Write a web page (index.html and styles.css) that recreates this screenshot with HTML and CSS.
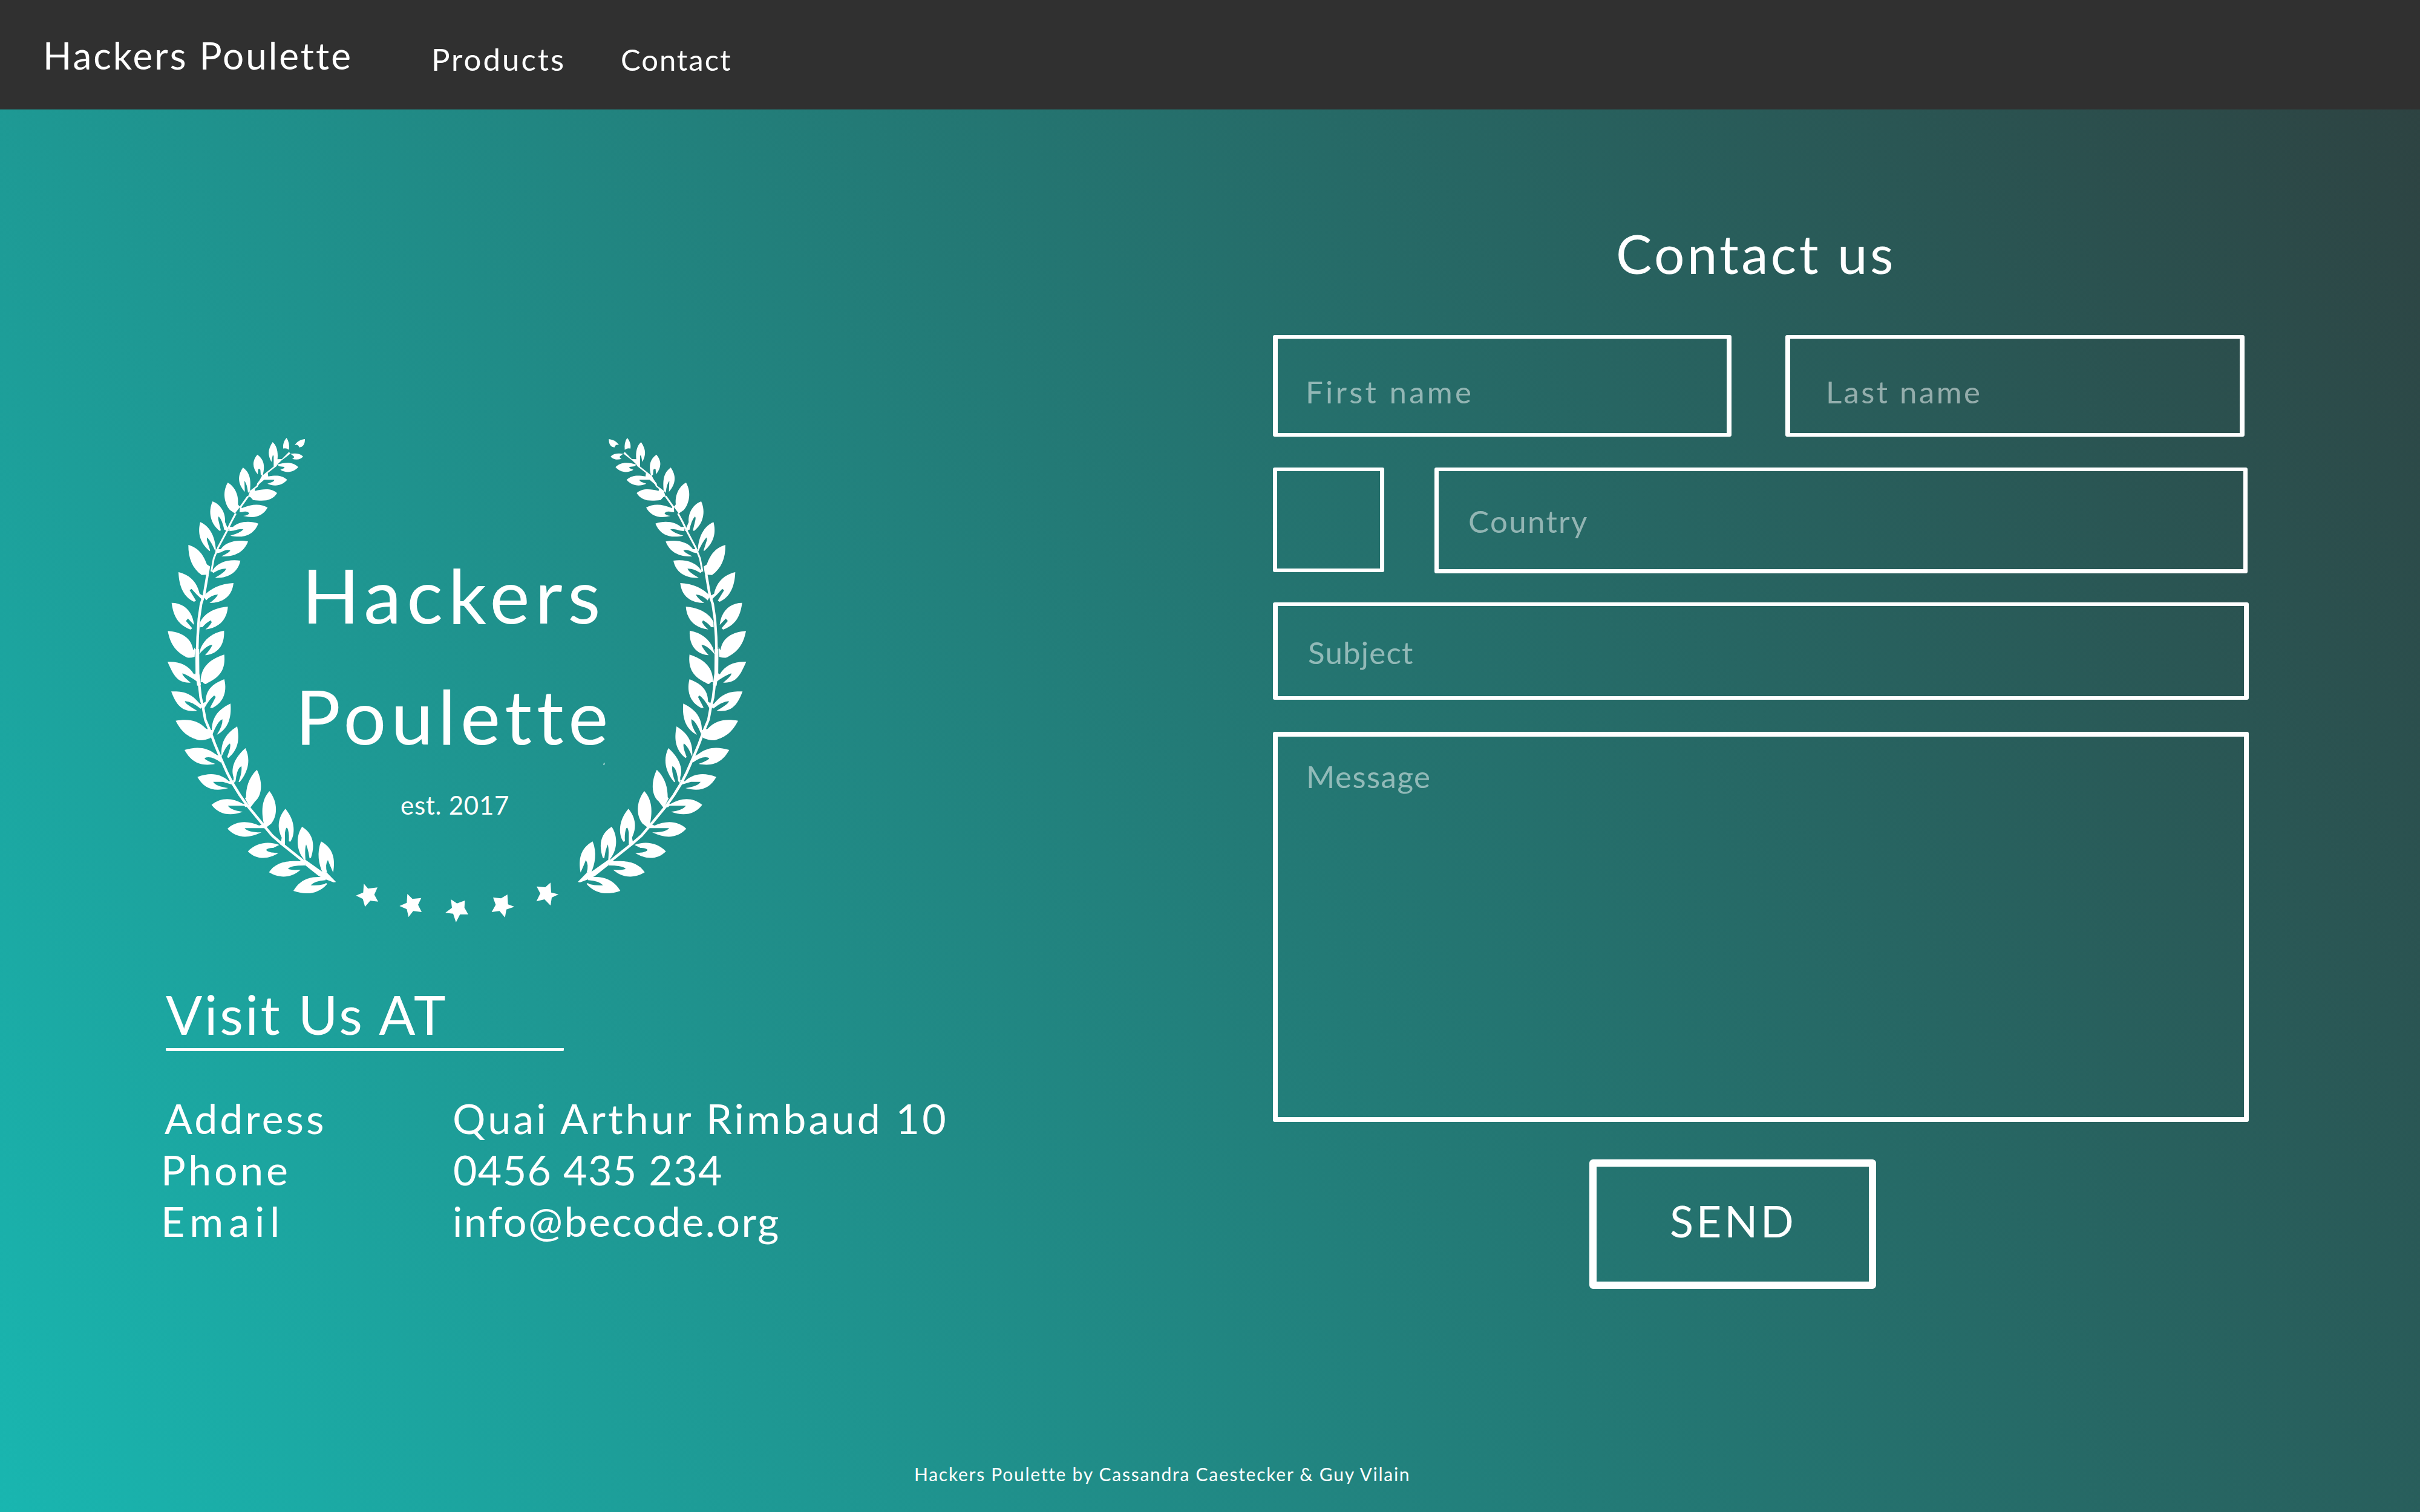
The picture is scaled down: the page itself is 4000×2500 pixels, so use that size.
FILE: index.html
```html
<!DOCTYPE html>
<html lang="en">
<head>
<meta charset="utf-8">
<title>Hackers Poulette - Contact</title>
<link rel="stylesheet" href="styles.css">
</head>
<body>
<header class="navbar">
  <a class="brand">Hackers Poulette</a>
  <nav class="nav">
    <a class="nav-products">Products</a>
    <a class="nav-contact">Contact</a>
  </nav>
</header>
<main class="content">
  <section class="about">
    <div class="logo">
      <svg class="wreath" viewBox="60 0 2910 2490" fill="#fff">
        <defs>
          <g id="branch">
            <!-- upper half -->
            <path d="M671 72C655 90 652 110 655 125Q668 121 683 131Q687 95 671 72Z"/>
            <path d="M762 78C735 82 722 92 712 108L722 106Q732 110 734 119C752 118 762 105 762 78Z"/>
            <path d="M753 164C735 148 715 148 690 151L706 163Q713 170 699 176C720 182 742 180 753 164Z"/>
            <path d="M602 93C580 125 575 155 596 191L602 160H607V215L622 207L646 184L670 166L690 150L683 142L648 177L626 178C630 140 622 110 602 93Z"/>
            <path d="M729 217C705 192 670 190 624 205L635 213L660 216Q665 222 640 230C670 248 705 245 729 217Z"/>
            <path d="M526 155C500 185 500 220 528 253L530 228Q536 222 541 230L543 255L552 262C564 215 562 180 526 155Z"/>
            <path d="M674 280C645 256 620 258 580 263L578 245L554 262L525 298L522 312L560 280H610Q612 290 576 299C610 315 650 310 674 280Z"/>
            <path d="M455 219C430 255 425 295 464 340L462 285Q475 300 480 345L490 333C495 280 490 245 455 219Z"/>
            <path d="M624 346C600 322 560 323 515 335L513 318L490 335L480 362L492 366L505 380C560 388 600 385 624 346Z"/>
            <path d="M379 294C350 345 365 400 390 430L415 447L440 415L430 402C435 350 410 310 379 294Z"/>
            <path d="M577 418C545 398 500 398 450 420L440 410L438 440L450 440Q475 432 486 446Q480 456 456 459C510 472 550 465 577 418Z"/>
            <path d="M304 387C280 440 295 500 340 534L345 530L333 480Q330 465 335 462Q352 480 362 528L385 535L366 490C370 440 340 400 304 387Z"/>
            <path d="M531 497C480 480 430 490 405 514H385L388 535L410 532Q440 520 457 526Q440 545 392 557C450 570 505 560 531 497Z"/>
            <path d="M243 490C230 540 238 590 290 634L292 630L276 580Q275 568 278 566Q300 590 320 640L320 620C315 560 290 510 243 490Z"/>
            <path d="M480 586C430 575 370 585 345 624H322V645L345 640Q375 622 392 630Q390 640 348 659C410 665 460 640 480 586Z"/>
            <path d="M184 603C183 670 205 720 250 752L285 750L292 710L276 700C255 640 225 615 184 603Z"/>
            <path d="M442 681C380 673 330 690 305 728L300 735L308 742Q345 718 372 721Q365 740 316 766C380 770 430 740 442 681Z"/>
            <path d="M135 738C138 810 160 860 212 885L222 880L190 827L200 821Q225 850 250 872L262 858L240 845C225 780 185 750 135 738Z"/>
            <path d="M408 792C345 795 290 820 260 857L272 878Q300 850 331 849Q320 870 289 891C355 890 400 860 408 792Z"/>
            <path d="M101 890C110 960 135 1000 195 1023L203 1016L172 980L182 968L212 1000C205 930 160 890 101 890Z"/>
            <path d="M380 909C310 915 262 945 243 985L242 1012L255 1010Q270 990 295 977L300 986Q290 1005 269 1022C330 1015 375 980 380 909Z"/>
            <path d="M82 1030C95 1100 125 1135 175 1160Q190 1166 215 1158L218 1110L208 1125C200 1065 150 1035 82 1030Z"/>
            <path d="M361 1028C300 1040 265 1070 245 1115L238 1145Q275 1100 303 1099Q295 1120 267 1150C325 1145 365 1105 361 1028Z"/>
            <path d="M81 1183C110 1250 130 1290 195 1286Q150 1250 155 1240Q185 1250 230 1283L220 1240L212 1245C185 1200 140 1180 81 1183Z"/>
            <path d="M362 1147C290 1170 245 1210 245 1283L256 1284Q265 1300 280 1287C340 1260 370 1220 362 1147Z"/>
            <!-- lower half -->
            <g transform="translate(0 1200)">
              <path d="M99 130C125 200 155 235 228 226Q165 190 167 178Q200 180 245 215L258 200L240 190C200 140 160 127 99 130Z"/>
              <path d="M362 69C295 95 270 130 270 180L255 190L262 215Q290 165 312 150L320 157L292 210L302 212C350 190 380 140 362 69Z"/>
              <path d="M121 275C150 330 180 355 235 371Q260 375 295 360L302 322L272 315C230 270 180 265 121 275Z"/>
              <path d="M393 190C320 225 300 270 300 330L303 345Q330 275 353 268Q355 300 325 345C375 320 400 270 393 190Z"/>
              <path d="M165 420C195 475 240 505 317 489Q262 470 265 460Q295 445 345 482V455L318 440C270 405 225 403 165 420Z"/>
              <path d="M426 303C360 345 345 390 348 455Q370 400 390 388Q398 400 376 455L382 460C430 420 440 370 426 303Z"/>
              <path d="M229 554C260 610 310 630 382 609Q320 600 307 578H355L400 592L410 570L385 575C340 535 290 532 229 554Z"/>
              <path d="M467 411C405 465 395 520 408 555V585L418 575Q425 510 447 500Q452 530 433 578L438 580C480 530 495 470 467 411Z"/>
              <path d="M299 692C335 740 390 750 454 727Q395 720 380 697H460L470 705L480 690L455 687C400 655 345 655 299 692Z"/>
              <path d="M524 518C480 560 470 610 470 655L465 660L490 708L515 675C555 640 550 570 524 518Z"/>
              <path d="M378 811C425 860 480 860 547 829Q480 830 463 808H562L570 800L550 790L535 795C480 770 420 770 378 811Z"/>
              <path d="M586 624C545 670 545 730 560 795L570 805L595 785C625 750 630 680 586 624Z"/>
              <path d="M479 923C520 965 580 965 631 931Q575 930 570 915Q580 905 605 906L635 891C580 870 520 880 479 923Z"/>
              <path d="M665 712C625 760 625 810 647 855L640 890H663V830Q670 790 678 815Q685 840 682 873L690 875C715 840 715 770 665 712Z"/>
              <path d="M584 1027C630 1055 690 1060 741 1014Q690 1018 678 1009Q695 992 765 993L760 965L735 972C690 970 620 970 584 1027Z"/>
              <path d="M748 801C720 840 715 910 755 960L765 965Q760 910 768 889Q780 920 785 958L792 955C810 900 810 840 748 801Z"/>
              <path d="M705 1119C750 1135 820 1145 872 1085Q868 1077 860 1085Q820 1095 790 1091Q810 1070 865 1066V1048L830 1050C790 1050 740 1060 705 1119Z"/>
              <path d="M842 874C820 930 830 985 850 1030L872 1028Q860 990 876 966Q885 990 902 1028C915 960 900 905 842 874Z"/>
              <path d="M755 958L850 1025L872 1030L916 1075L905 1077L865 1062L830 1045L765 993Z"/>
            </g>
            <!-- stem -->
            <path class="stem stem-tip" d="M622 207L552 262L525 312L488 340"/>
            <path class="stem stem-thin" d="M480 362L440 418M419 447L395 492L372 540L332 615L310 670L298 735"/>
            <path class="stem stem-mid" d="M279 750L262 850L247 895L236 970L230 1060L228 1130"/>
            <path class="stem stem-thick" d="M228 1120L229 1240L237 1300"/>
            <path class="stem stem-mid" d="M237 1290L245 1360L256 1405L268 1470L293 1530L315 1590L340 1650L375 1730L403 1785L440 1845L478 1898L562 2000L600 2045L650 2088L755 2172"/>
          </g>
        </defs>
        <use href="#branch"/>
        <use href="#branch" transform="translate(3031 0) scale(-1 1)"/>
        <g transform="translate(0 1200)">
          <polygon points="1054,1083 1075,1108 1122,1102 1106,1138 1125,1172 1086,1168 1060,1198 1049,1159 1015,1142 1051,1127"/>
          <polygon points="1270,1134 1295,1159 1339,1154 1323,1188 1341,1224 1299,1219 1276,1249 1267,1210 1231,1194 1267,1178"/>
          <polygon points="1486,1161 1516,1181 1555,1167 1553,1202 1572,1236 1531,1236 1511,1275 1497,1232 1458,1228 1491,1203"/>
          <polygon points="1766,1137 1769,1186 1801,1198 1761,1211 1754,1251 1727,1219 1688,1224 1708,1188 1695,1152 1735,1156"/>
          <polygon points="1980,1078 1983,1127 2020,1136 1986,1152 1980,1192 1950,1161 1910,1171 1929,1132 1911,1097 1954,1101"/>
        </g>
        <path d="M2246 1681L2249 1692H2241V1688H2244Z"/>
      </svg>
      <div class="logo-text">
        <span class="logo-hackers">Hackers</span>
        <span class="logo-poulette">Poulette</span>
        <span class="logo-est">est. 2017</span>
      </div>
    </div>
    <h2 class="visit">Visit Us AT</h2>
    <dl class="details">
      <dt class="k-address">Address</dt><dd class="v-address">Quai Arthur Rimbaud 10</dd>
      <dt class="k-phone">Phone</dt><dd class="v-phone">0456 435 234</dd>
      <dt class="k-email">Email</dt><dd class="v-email">info@becode.org</dd>
    </dl>
  </section>
  <section class="contact">
    <h1 class="contact-title">Contact us</h1>
    <form class="form">
      <div class="row row-names">
        <label class="field first-name">First name</label>
        <label class="field last-name">Last name</label>
      </div>
      <div class="row row-country">
        <label class="field flag"></label>
        <label class="field country">Country</label>
      </div>
      <label class="field subject">Subject</label>
      <label class="field message">Message</label>
      <button class="send" type="button">SEND</button>
    </form>
  </section>
</main>
<footer class="footer">Hackers Poulette by Cassandra Caestecker &amp; Guy Vilain</footer>
</body>
</html>
```
FILE: styles.css
```css
* {
  box-sizing: border-box;
  margin: 0;
  padding: 0;
}

body {
  display: flex;
  flex-direction: column;
  width: 4000px;
  height: 2500px;
  overflow: hidden;
  color: #fff;
  font-family: Lato, "Open Sans", sans-serif;
  font-weight: 400;
  background: linear-gradient(61deg, #19b6b0, #237a76 50%, #2e4140);
}

/* Top bar */
.navbar {
  display: flex;
  align-items: flex-start;
  height: 181px;
  padding: 54px 0 0 71px;
  background: #303030;
}
.brand {
  width: 642px;
  font-size: 62px;
  line-height: 74px;
  letter-spacing: 3px;
}
.nav { display: flex; }
.nav-products {
  width: 313px;
  padding-top: 13px;
  font-size: 51px;
  line-height: 61px;
  letter-spacing: 2.97px;
}
.nav-contact {
  padding-top: 15px;
  font-size: 49px;
  line-height: 58px;
  letter-spacing: 1.94px;
}

.content {
  display: grid;
  grid-template-columns: 2104px 1613px;
  height: 2238px;
}

/* Logo and address */
.about { padding: 519px 0 0 270px; }
.logo {
  display: grid;
  width: 970px;
  height: 830px;
}
.wreath, .logo-text { grid-area: 1 / 1; }
.wreath { width: 970px; height: 830px; }
.stem { fill: none; stroke: #fff; stroke-linejoin: round; }
.stem-tip { stroke-width: 7px; }
.stem-thin { stroke-width: 9px; }
.stem-mid { stroke-width: 13px; }
.stem-thick { stroke-width: 19px; }
.logo-text {
  display: flex;
  flex-direction: column;
  align-items: flex-start;
  padding-top: 208px;
  font-size: 125px;
  line-height: 150px;
}
.logo-hackers { margin-left: 229px; letter-spacing: 8.8px; }
.logo-poulette { margin: 50px 0 48px 218px; letter-spacing: 7.8px; }
.logo-est {
  margin-left: 392px;
  font-size: 42px;
  line-height: 50px;
  letter-spacing: 0.73px;
}
.visit {
  width: 658px;
  margin: 93px 0 0 4px;
  padding-bottom: 3px;
  border-bottom: 5px solid #fff;
  border-radius: 2px;
  font-size: 89px;
  font-weight: 400;
  line-height: 107px;
  letter-spacing: 3.82px;
}
.details {
  display: grid;
  grid-template-columns: 482px auto;
  grid-auto-rows: 85px;
  margin: 68px 0 0 -4px;
  font-size: 68px;
  line-height: 85px;
}
.k-address { padding-left: 6px; letter-spacing: 3.97px; }
.k-phone { letter-spacing: 4.73px; }
.k-email { letter-spacing: 9px; }
.v-address { letter-spacing: 4.21px; }
.v-phone { padding-left: 1px; letter-spacing: 1.38px; }
.v-email { letter-spacing: 2.51px; }

/* Contact form */
.contact-title {
  margin: 184px 0 82px 567px;
  font-size: 89px;
  font-weight: 400;
  line-height: 107px;
  letter-spacing: 4.33px;
}
.form { display: flex; flex-direction: column; }
.row { display: flex; align-items: flex-start; }
.row-names { gap: 89px; margin-bottom: 51px; }
.row-country { gap: 83px; margin-bottom: 48px; }
.field {
  border: solid #fff;
  border-width: 6px 8px;
  border-radius: 3px;
  color: rgba(255, 255, 255, 0.5);
  font-size: 51px;
  line-height: 61px;
}
.first-name {
  width: 758px;
  height: 168px;
  padding: 57px 0 0 46px;
  letter-spacing: 4.27px;
}
.last-name {
  width: 759px;
  height: 168px;
  padding: 57px 0 0 59px;
  letter-spacing: 3.41px;
}
.flag {
  width: 184px;
  height: 173px;
  border-width: 6px 7px;
}
.country {
  width: 1344px;
  height: 175px;
  padding: 52px 0 0 49px;
  border-width: 6px 7px 7px;
  letter-spacing: 2.36px;
}
.subject {
  height: 161px;
  margin-bottom: 53px;
  padding: 46px 0 0 50px;
  letter-spacing: 1.22px;
}
.message {
  height: 645px;
  margin-bottom: 62px;
  padding: 35px 0 0 47px;
  border-width: 8px;
  letter-spacing: 1.48px;
}
.send {
  display: flex;
  align-items: flex-start;
  width: 474px;
  height: 214px;
  margin-left: 523px;
  padding: 46px 0 0 121px;
  border: 12px solid #fff;
  border-radius: 6px;
  background: none;
  color: inherit;
  font: 400 72px/86px Lato, "Open Sans", sans-serif;
  letter-spacing: 4.8px;
}

.footer {
  padding-left: 1511px;
  font-size: 30px;
  line-height: 36px;
  letter-spacing: 1.73px;
}
```
